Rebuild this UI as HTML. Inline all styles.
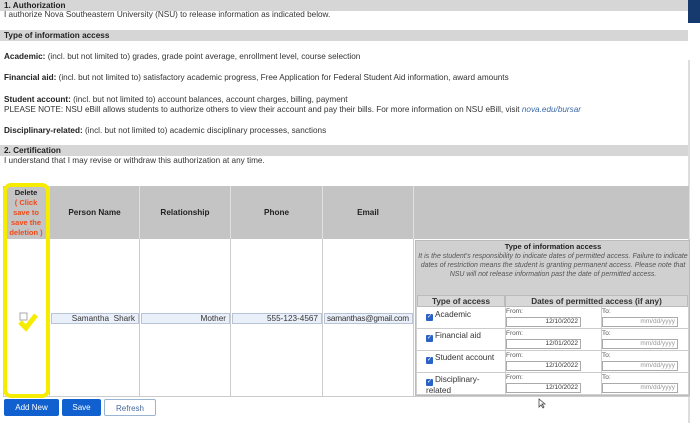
<!DOCTYPE html>
<html><head><style>
*{box-sizing:border-box;margin:0;padding:0}
body{width:700px;height:423px;background:#fff;font-family:"Liberation Sans",sans-serif;font-size:8.2px;color:#333;position:relative;overflow:hidden}
.a{position:absolute}
.bar{position:absolute;left:0;width:688px;height:11px;background:#d6d6d6;font-weight:bold;padding-left:4px;line-height:11px;color:#222}
.t{position:absolute;left:4px;white-space:nowrap}
b{color:#222}
.hd{position:absolute;top:186px;height:53px;background:#c4c4c4;border-right:1px solid #e0e0e0;font-weight:bold;text-align:center;line-height:53px;color:#222}
.col{position:absolute;top:239px;height:157px;border-right:1px solid #ccc}
.inp{position:absolute;top:313px;height:11px;background:#eaf0fa;border:1px solid #b8c4d6;text-align:right;padding-right:3px;line-height:9px}
.btn{position:absolute;top:399px;height:17px;line-height:17px;text-align:center;font-size:8px;border-radius:2px}
.cb{display:inline-block;width:7px;height:7px;background:#2a62c6;border-radius:1px;vertical-align:-1px;margin-right:2px;color:#fff;font-size:6px;line-height:7px;text-align:center}
.date{position:absolute;height:10px;border:1px solid #aaa;background:#fff;text-align:right;font-size:6.5px;line-height:8px;padding-right:2px}
.lbl{position:absolute;font-size:6.5px;color:#555}
</style></head><body>
<div class="bar" style="top:0">1. Authorization</div>
<div class="t" style="top:10px">I authorize Nova Southeastern University (NSU) to release information as indicated below.</div>
<div class="bar" style="top:30px">Type of information access</div>
<div class="t" style="top:52px"><b>Academic:</b> (incl. but not limited to) grades, grade point average, enrollment level, course selection</div>
<div class="t" style="top:73px"><b>Financial aid:</b> (incl. but not limited to) satisfactory academic progress, Free Application for Federal Student Aid information, award amounts</div>
<div class="t" style="top:95px"><b>Student account:</b> (incl. but not limited to) account balances, account charges, billing, payment</div>
<div class="t" style="top:105px">PLEASE NOTE: NSU eBill allows students to authorize others to view their account and pay their bills. For more information on NSU eBill, visit <i style="color:#3a6aa8">nova.edu/bursar</i></div>
<div class="t" style="top:126px"><b>Disciplinary-related:</b> (incl. but not limited to) academic disciplinary processes, sanctions</div>
<div class="bar" style="top:145px">2. Certification</div>
<div class="t" style="top:156px">I understand that I may revise or withdraw this authorization at any time.</div>
<div class="a" style="left:688px;top:0;width:12px;height:23px;background:#163a6e"></div>
<div class="a" style="left:688px;top:60px;width:2px;height:363px;background:#ddd"></div>

<div class="a" style="left:3px;top:186px;width:687px;height:211px;border:1px solid #ccc"></div>
<div class="hd" style="left:3px;width:47px;line-height:10px;padding-top:2px;font-size:7.5px">Delete<br><span style="color:#f04a1a">( Click<br>save to<br>save the<br>deletion )</span></div>
<div class="hd" style="left:50px;width:90px">Person Name</div>
<div class="hd" style="left:140px;width:91px">Relationship</div>
<div class="hd" style="left:231px;width:92px">Phone</div>
<div class="hd" style="left:323px;width:91px">Email</div>
<div class="hd" style="left:414px;width:276px"></div>
<div class="col" style="left:3px;width:47px"></div>
<div class="col" style="left:50px;width:90px"></div>
<div class="col" style="left:140px;width:91px"></div>
<div class="col" style="left:231px;width:92px"></div>
<div class="col" style="left:323px;width:91px"></div>
<div class="inp" style="left:51px;width:88px">Samantha &nbsp;Shark</div>
<div class="inp" style="left:141px;width:89px">Mother</div>
<div class="inp" style="left:232px;width:90px">555-123-4567</div>
<div class="inp" style="left:324px;width:89px;text-align:left;padding-left:2px;letter-spacing:-.2px">samanthas@gmail.com</div>

<div class="a" style="left:415px;top:240px;width:275px;height:156px;background:#d0d0d0;border:1px solid #bbb"></div>
<div class="a" style="left:417px;top:242px;width:272px;text-align:center;font-size:7px;line-height:9px;color:#555"><b style="font-size:7.5px">Type of information access</b><br><i>It is the student's responsibility to indicate dates of permitted access. Failure to indicate dates of restriction means the student is granting permanent access. Please note that NSU will not release information past the date of permitted access.</i></div>
<div class="a" style="left:417px;top:295px;width:88px;height:12px;text-align:center;font-weight:bold;line-height:12px;background:#d8d8d8;border:1px solid #bbb">Type of access</div>
<div class="a" style="left:505px;top:295px;width:183px;height:12px;text-align:center;font-weight:bold;line-height:12px;background:#d8d8d8;border:1px solid #bbb">Dates of permitted access (if any)</div>

<div class="a" style="left:417px;top:307px;width:271px;height:87px;background:#fff"></div>
<div class="a" style="left:417px;top:328px;width:271px;height:1px;background:#ccc"></div>
<div class="a" style="left:417px;top:350px;width:271px;height:1px;background:#ccc"></div>
<div class="a" style="left:417px;top:372px;width:271px;height:1px;background:#ccc"></div>
<div class="a" style="left:505px;top:307px;width:1px;height:87px;background:#ccc"></div>
<div class="a" style="left:601px;top:307px;width:1px;height:87px;background:#ccc"></div>

<div class="a" style="left:426px;top:310px"><span class="cb">✓</span>Academic</div>
<div class="a" style="left:426px;top:331px"><span class="cb">✓</span>Financial aid</div>
<div class="a" style="left:426px;top:353px"><span class="cb">✓</span>Student account</div>
<div class="a" style="left:426px;top:375px;line-height:10px"><span class="cb">✓</span>Disciplinary-<br>related</div>

<div class="lbl" style="left:506px;top:308px">From:</div><div class="date" style="left:506px;top:317px;width:75px">12/10/2022</div>
<div class="lbl" style="left:602px;top:308px">To:</div><div class="date" style="left:602px;top:317px;width:76px;color:#999">mm/dd/yyyy</div>
<div class="lbl" style="left:506px;top:330px">From:</div><div class="date" style="left:506px;top:339px;width:75px">12/01/2022</div>
<div class="lbl" style="left:602px;top:330px">To:</div><div class="date" style="left:602px;top:339px;width:76px;color:#999">mm/dd/yyyy</div>
<div class="lbl" style="left:506px;top:352px">From:</div><div class="date" style="left:506px;top:361px;width:75px">12/10/2022</div>
<div class="lbl" style="left:602px;top:352px">To:</div><div class="date" style="left:602px;top:361px;width:76px;color:#999">mm/dd/yyyy</div>
<div class="lbl" style="left:506px;top:374px">From:</div><div class="date" style="left:506px;top:383px;width:75px">12/10/2022</div>
<div class="lbl" style="left:602px;top:374px">To:</div><div class="date" style="left:602px;top:383px;width:76px;color:#999">mm/dd/yyyy</div>

<div class="a" style="left:3px;top:183px;width:47px;height:215px;border:4px solid #f5ec00;border-radius:8px"></div>
<svg class="a" style="left:17px;top:310px" width="22" height="22" viewBox="0 0 22 22"><rect x="3" y="3" width="7" height="7" fill="#fff" stroke="#aaa"/><path d="M3 12 L9 18 L19 5" fill="none" stroke="#f5ec00" stroke-width="5"/></svg>

<div class="btn" style="left:4px;width:55px;background:#1060cf;color:#fff">Add New</div>
<div class="btn" style="left:62px;width:39px;background:#1060cf;color:#fff">Save</div>
<div class="btn" style="left:104px;width:52px;border:1px solid #9ab4d4;color:#4a6a9a;background:#fff">Refresh</div>
<svg class="a" style="left:538px;top:398px" width="8" height="11" viewBox="0 0 8 11"><path d="M1 1 L1 9 L3 7 L5 10 L6 9 L4 6 L7 6 Z" fill="#fff" stroke="#444" stroke-width=".8"/></svg>
</body></html>
